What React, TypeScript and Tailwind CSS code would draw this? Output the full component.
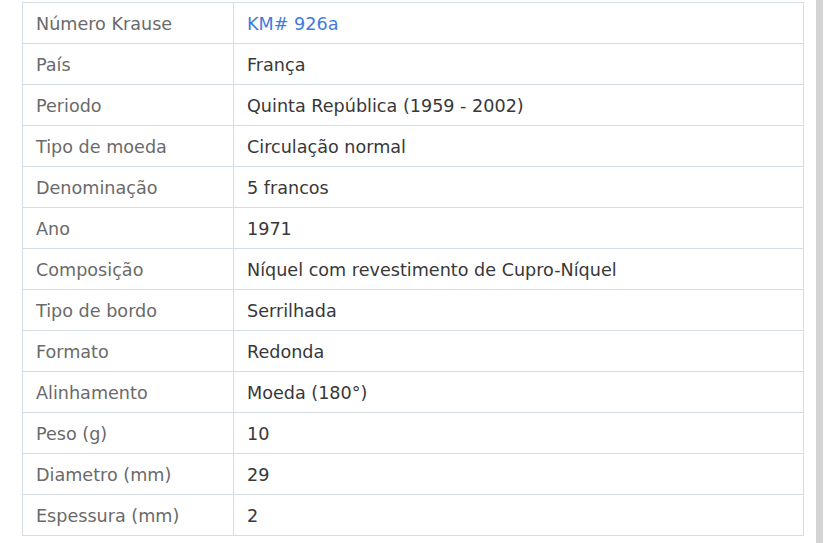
import React from 'react';

const rows: { label: string; value: string; link?: boolean }[] = [
  { label: 'Número Krause', value: 'KM# 926a', link: true },
  { label: 'País', value: 'França' },
  { label: 'Periodo', value: 'Quinta República (1959 - 2002)' },
  { label: 'Tipo de moeda', value: 'Circulação normal' },
  { label: 'Denominação', value: '5 francos' },
  { label: 'Ano', value: '1971' },
  { label: 'Composição', value: 'Níquel com revestimento de Cupro-Níquel' },
  { label: 'Tipo de bordo', value: 'Serrilhada' },
  { label: 'Formato', value: 'Redonda' },
  { label: 'Alinhamento', value: 'Moeda (180°)' },
  { label: 'Peso (g)', value: '10' },
  { label: 'Diametro (mm)', value: '29' },
  { label: 'Espessura (mm)', value: '2' },
];

const App: React.FC = () => {
  return (
    <div className="flex h-[543px] w-[828px] bg-white font-['DejaVu_Sans',sans-serif] overflow-hidden">
      <div className="pl-[22px] pt-[2px] w-[816px]">
        {/* Coin specs table */}
        <table className="w-[782px] border-collapse text-[17.6px] leading-none">
          <tbody>
            {rows.map((r) => (
              <tr key={r.label} className="h-[41px]">
                <td className="w-[211px] border border-[#d5dde6] pl-[13px] pt-[3px] text-[#6a6a6a]">{r.label}</td>
                <td className="border border-[#d5dde6] pl-[13px] pt-[3px] text-[#383838]">
                  {r.link ? <a href="#" className="text-[#3f7be0]">{r.value}</a> : r.value}
                </td>
              </tr>
            ))}
          </tbody>
        </table>
      </div>
      {/* Scrollbar track */}
      <div className="w-[7px] h-full bg-[#d4d4d4]"></div>
    </div>
  );
};

export default App;
